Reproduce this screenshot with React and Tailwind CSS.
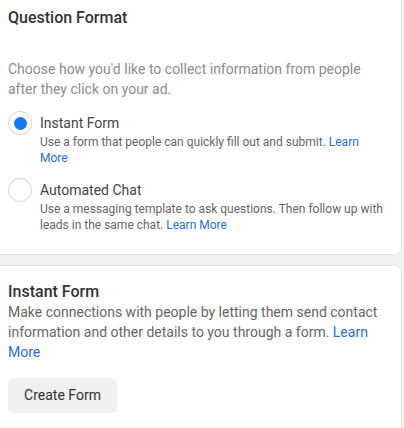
import React from "react";

function Radio({ checked }) {
  return (
    <div className="mt-[-2px] flex h-6 w-6 shrink-0 items-center justify-center rounded-full border border-[#d4d4d4] bg-white">
      {checked && <div className="h-[13px] w-[13px] rounded-full bg-[#1877f2]" />}
    </div>
  );
}

function Option({ checked, title, children }) {
  return (
    <div className="flex gap-2">
      <Radio checked={checked} />
      <div className="flex flex-col">
        <div className="text-[14px] leading-5 text-[#444]">{title}</div>
        <div className="mt-[1px] text-[12px] leading-4 text-[#666]">{children}</div>
      </div>
    </div>
  );
}

export default function App() {
  return (
    <div
      className="min-h-[428px] w-[404px] overflow-hidden bg-[#f2f2f2]"
      style={{ fontFamily: "Roboto, 'Noto Sans', sans-serif" }}
    >
      <div className="-ml-2 mt-[-10px] w-[410px] rounded-lg border border-[#e2e2e2] bg-white pb-[21px] pl-[15px] pr-[18px] pt-[17px]">
        <h2 className="text-[16px] font-medium leading-5 text-[#333]">Question Format</h2>
        <p className="mt-[31px] text-[14px] leading-5 text-[#8c8c8c]">
          Choose how you'd like to collect information from people after they click on your ad.
        </p>
        <div className="mt-[14px] flex flex-col gap-[14px]">
          <Option checked title="Instant Form">
            Use a form that people can quickly fill out and submit.{" "}
            <span className="text-[#2670d6]">Learn More</span>
          </Option>
          <Option title="Automated Chat">
            Use a messaging template to ask questions. Then follow up with leads in the same chat.{" "}
            <span className="text-[#2670d6]">Learn More</span>
          </Option>
        </div>
      </div>
      <div className="-ml-2 mt-[10px] w-[410px] rounded-lg border border-[#e2e2e2] bg-white pb-[30px] pl-[15px] pr-[18px] pt-[16px]">
        <h2 className="text-[16px] font-medium leading-5 text-[#333]">Instant Form</h2>
        <p className="text-[14px] leading-5 text-[#666]">
          Make connections with people by letting them send contact information and other details to you through a form.{" "}
          <span className="text-[#2670d6]">Learn More</span>
        </p>
        <button className="mt-[16px] h-[35px] w-[109px] rounded-md bg-[#f0f0f0] text-[14px] text-[#333]">
          Create Form
        </button>
      </div>
    </div>
  );
}
